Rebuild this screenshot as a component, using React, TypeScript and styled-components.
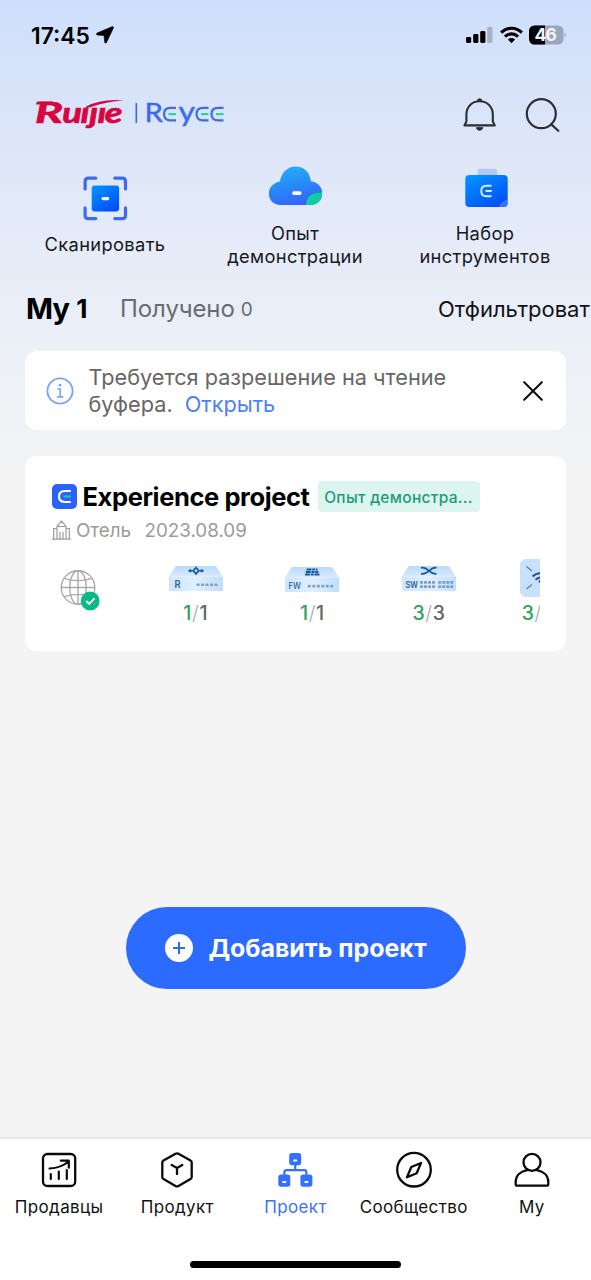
import React from "react";
import styled, { createGlobalStyle } from "styled-components";

const GlobalStyle = createGlobalStyle`
  * { box-sizing: border-box; }
  body { margin: 0; font-family: Inter, "Noto Sans", "Liberation Sans", sans-serif; color: #000; }
  svg { display: block; flex: none; }
  button { font-family: inherit; border: 0; background: none; padding: 0; color: inherit; }
`;

const Screen = styled.div`
  width: 591px;
  height: 1280px;
  display: flex;
  flex-direction: column;
  overflow: hidden;
  background: linear-gradient(180deg, #cfdffb 0px, #dae4f9 110px, #e2e9f8 200px, #ebeff7 330px, #f4f4f4 480px);
`;

const StatusBar = styled.div`
  height: 70px;
  padding: 0 24px 0 31px;
  display: flex;
  align-items: center;
`;

const Clock = styled.span`
  font-size: 22.8px;
  font-weight: 600;
  width: 65px;
  padding-top: 1px;
  white-space: nowrap;
`;

const StatusIcons = styled.div`
  margin-left: auto;
  display: flex;
  align-items: center;
  gap: 6.5px;
`;

const Header = styled.header`
  height: 90px;
  padding: 0 30px 0 33px;
  display: flex;
  align-items: center;
`;

const HeaderActions = styled.div`
  margin-left: auto;
  display: flex;
  gap: 28px;
`;

const QuickActions = styled.div`
  height: 116px;
  padding: 0 10px;
  display: grid;
  grid-template-columns: repeat(3, 190px);
  align-items: center;
`;

const QuickAction = styled.button`
  display: flex;
  flex-direction: column;
  align-items: center;
  gap: 16px;
  padding-bottom: 3px;
`;

const SingleLineAction = styled(QuickAction)`
  gap: 13px;
  padding-bottom: 4px;
`;

const QuickLabel = styled.span<{ $spacing: number }>`
  font-size: 18.3px;
  line-height: 23px;
  color: #15181e;
  letter-spacing: ${(p) => p.$spacing}px;
  white-space: pre-line;
  text-align: center;
`;

const Tabs = styled.div`
  height: 75px;
  padding: 0 0 10px 26px;
  display: flex;
  align-items: center;
  white-space: nowrap;
`;

const ActiveTab = styled.span`
  flex: none;
  width: 94px;
  font-size: 29px;
  font-weight: 700;
  letter-spacing: -0.8px;
  small { font-size: 26px; margin-left: 7px; vertical-align: 1px; }
`;

const Tab = styled.span`
  flex: none;
  width: 318px;
  font-size: 24px;
  letter-spacing: -0.1px;
  color: #686b71;
  small { font-size: 19px; margin-left: 6px; vertical-align: 1px; }
`;

const Filter = styled.span`
  flex: none;
  font-size: 22px;
  color: #101216;
`;

const Notice = styled.section`
  height: 79px;
  margin: 0 25px;
  padding: 0 22px 0 20.5px;
  display: flex;
  align-items: center;
  background: #fff;
  border-radius: 12px;
`;

const NoticeText = styled.p`
  flex: 1;
  margin: 1px 0 0 15px;
  font-size: 21.7px;
  line-height: 27px;
  color: #666;
  white-space: nowrap;
`;

const NoticeLink = styled.a`
  margin-left: 12px;
  color: #4c82f8;
`;

const ProjectCard = styled.section`
  height: 195px;
  margin: 26px 25px 0;
  padding: 24px 26px 0 27px;
  background: #fff;
  border-radius: 12px;
`;

const TitleRow = styled.div`
  height: 33px;
  display: flex;
  align-items: center;
`;

const Title = styled.h2`
  margin: 0 0 0 5.5px;
  width: 235px;
  font-size: 25.5px;
  font-weight: 700;
  letter-spacing: -0.4px;
  white-space: nowrap;
`;

const Tag = styled.span`
  width: 162px;
  height: 31px;
  line-height: 33px;
  border-radius: 4px;
  background: #dcf5ef;
  color: #219b74;
  font-size: 15.5px;
  font-weight: 500;
  letter-spacing: 0.3px;
  text-align: center;
  white-space: nowrap;
`;

const MetaRow = styled.div`
  height: 34px;
  display: flex;
  align-items: center;
  font-size: 18.8px;
  color: #9b9b9b;
  white-space: nowrap;
`;

const MetaKind = styled.span`
  margin-left: 5px;
  width: 68.5px;
`;

const Devices = styled.div`
  margin-top: 12px;
  display: flex;
  gap: 62.7px;
  overflow: hidden;
`;

const Device = styled.div`
  width: 54px;
  flex: none;
  display: flex;
  flex-direction: column;
  align-items: center;
`;

const Count = styled.span`
  height: 26px;
  line-height: 26px;
  font-size: 19.5px;
  font-weight: 500;
  letter-spacing: 0.6px;
  color: #666;
  white-space: nowrap;
  b { font-weight: 500; color: #2aa65a; }
  i { font-style: normal; font-weight: 300; color: #aaa; }
`;

const ClippedDevice = styled(Device)`
  align-items: flex-start;
  ${Count} { margin-left: 3px; }
`;

const Action = styled.div`
  flex: 1;
  display: flex;
  justify-content: center;
  padding-top: 256px;
`;

const AddButton = styled.button`
  width: 340px;
  height: 82px;
  padding-left: 39px;
  display: flex;
  align-items: center;
  gap: 16px;
  border-radius: 41px;
  background: #2b6bff;
  color: #fff;
  font-size: 24.9px;
  font-weight: 700;
  white-space: nowrap;
`;

const NavBar = styled.nav`
  height: 143px;
  border-top: 2px solid #e8e8e8;
  background: #fff;
  display: flex;
  flex-direction: column;
  align-items: center;
`;

const NavItems = styled.div`
  width: 100%;
  height: 122px;
  display: grid;
  grid-template-columns: repeat(5, 1fr);
  align-items: start;
`;

const NavItem = styled.button<{ $active?: boolean }>`
  padding-top: 12px;
  display: flex;
  flex-direction: column;
  align-items: center;
  gap: 7px;
  font-size: 17px;
  line-height: 22px;
  letter-spacing: 0.35px;
  color: ${(p) => (p.$active ? "#3b72f6" : "#111")};
`;

const HomeIndicator = styled.div`
  width: 211px;
  height: 7px;
  border-radius: 4px;
  background: #000;
`;

const LocationIcon = () => (
  <svg width="18" height="18" viewBox="0 0 18 18">
    <path d="M16 .7 1 7.1Q-.2 8.2 1.1 9L8 9.6 8.7 16.2Q9.4 17.9 10.5 16.5L17.4 1.9Q17.6 .2 16 .7Z" fill="#000" stroke="#000" strokeWidth=".6" />
  </svg>
);

const SignalIcon = () => (
  <svg width="27" height="18" viewBox="0 0 27 18">
    <rect x="0" y="11" width="5.2" height="6" rx="1.4" />
    <rect x="7.2" y="8" width="5.2" height="9" rx="1.4" />
    <rect x="14.2" y="5" width="5.2" height="12" rx="1.4" />
    <rect x="21.2" y="1" width="5.2" height="16" rx="1.4" fill="#a5b1c6" />
  </svg>
);

const WifiIcon = () => (
  <svg width="23" height="18" viewBox="0 0 23 18" fill="none" stroke="#000" strokeWidth="3.1">
    <path d="M1.1 6.6C7 .7 16 .7 21.9 6.6" />
    <path d="M5 10.6C8.7 7 14.3 7 18 10.6" />
    <path d="M11.5 17.2 7.9 13.5Q11.5 10.6 15.1 13.5Z" fill="#000" stroke="none" />
  </svg>
);

const BatteryIcon = () => (
  <svg width="38" height="20" viewBox="0 0 38 20">
    <rect x="0" y=".5" width="34.5" height="19" rx="5.5" fill="#9aa6bb" />
    <path d="M5.5 .5H16V19.5H5.5A5.5 5.5 0 0 1 0 14V6A5.5 5.5 0 0 1 5.5 .5Z" />
    <path d="M35.7 7.4Q37.8 10 35.7 12.6Z" fill="#8e9aae" />
    <text x="5.5" y="16.4" fontSize="18" fontWeight="700" fill="#eef3fd" textLength="22.5">46</text>
  </svg>
);

const BrandLogo = () => (
  <svg width="194" height="40" viewBox="0 0 194 40">
    <g fill="#d8063f" stroke="#d8063f" strokeWidth=".7" fontWeight="700" fontStyle="italic" fontFamily="Lato, sans-serif">
      <text x="2" y="27.6" fontSize="28" textLength="28" lengthAdjust="spacingAndGlyphs">R</text>
      <text transform="scale(1.3 1)" x="22.6 36.6 43.2 49.6 55.2" y="27.6" fontSize="28">uıȷıe</text>
      <path d="M4 6.6H20L18 9.6H2.8Z" stroke="none" />
      <path d="M53 11.6Q68 3.4 91 5.4Q73 6.6 57 12.2L52.5 13.2Z" stroke="none" />
    </g>
    <path d="M103.3 8V28" stroke="#3566e8" strokeWidth="1.6" />
    <g fill="#3c6af0" stroke="#3c6af0" strokeWidth=".4" fontFamily="Lato, sans-serif">
      <text x="111.5" y="26.8" fontSize="26.5" textLength="18.5" lengthAdjust="spacingAndGlyphs">R</text>
      <text x="145.5" y="25.8" fontSize="26" textLength="16.5" lengthAdjust="spacingAndGlyphs">y</text>
    </g>
    {[131, 163.5, 178.5].map((x) => (
      <g key={x} fill="none" strokeWidth="2.2">
        <path d={`M${x + 12} 12.8H${x + 6.5}Q${x} 12.8 ${x} 19.1T${x + 6.5} 25.4H${x + 12}`} stroke="#3c6af0" />
        <path d={`M${x + 4.5} 19.1H${x + 12}`} stroke="#28d5a6" />
      </g>
    ))}
  </svg>
);

const BellIcon = () => (
  <svg width="35" height="34" viewBox="-.6 0 35 34" fill="none" stroke="#292e38" strokeWidth="2.1" strokeLinejoin="round">
    <path d="M1.8 27.4H32.2L30.2 23.5V16.5C30.2 8.5 24.5 3.3 17 3.3S3.8 8.5 3.8 16.5V23.5Z" />
    <path d="M14.8 3a2.2 2.2 0 0 1 4.4 0M13.8 29.7h6.4q-.7 2.6-3.2 2.6t-3.2-2.6Z" fill="#292e38" strokeWidth="1" />
  </svg>
);

const SearchIcon = () => (
  <svg width="36" height="34" viewBox="-.5 0 36 34" fill="none" stroke="#292e38" strokeWidth="2.2" strokeLinecap="round">
    <circle cx="15.8" cy="15.7" r="14.5" />
    <path d="M25.8 26.4 32.8 32.8" />
  </svg>
);

const Gradients = () => (
  <defs>
    <linearGradient id="blue" x1="0" y1="0" x2=".7" y2="1">
      <stop offset="0" stopColor="#0597ff" />
      <stop offset="1" stopColor="#0150f8" />
    </linearGradient>
    <linearGradient id="cloud" x1=".3" y1="0" x2=".6" y2="1">
      <stop offset="0" stopColor="#21b0fa" />
      <stop offset="1" stopColor="#3361fa" />
    </linearGradient>
  </defs>
);

const ScanIcon = () => (
  <svg width="44" height="44" viewBox="-.3 -.4 44 44" overflow="visible">
    <Gradients />
    <path d="M1.8 12.5V5Q1.8 1.8 5 1.8H12.5M31.5 1.8H39Q42.2 1.8 42.2 5V12.5M42.2 31.5V39Q42.2 42.2 39 42.2H31.5M12.5 42.2H5Q1.8 42.2 1.8 39V31.5" fill="none" stroke="#3d6bee" strokeWidth="3.2" strokeLinecap="round" />
    <rect x="8.4" y="9" width="27.4" height="26" rx="2.8" fill="url(#blue)" />
    <rect x="18.3" y="20.5" width="7.6" height="3.3" rx="1.4" fill="#fff" />
  </svg>
);

const CloudIcon = () => (
  <svg width="54" height="40" viewBox="-.5 0 54 40" overflow="visible">
    <clipPath id="cloudShape">
      <path d="M12 39C5 39 .3 34 .3 27.5C.3 21.5 5 16.3 11.4 15.4C12.7 6.5 19 .4 27.2 .4C35.5 .4 41.2 6 42.4 15.2C49 16 53.8 21 53.8 27.3C53.8 34 49 39 42 39Z" />
    </clipPath>
    <g clipPath="url(#cloudShape)">
      <rect width="54" height="40" fill="url(#cloud)" />
      <path d="M37.4 40C37.4 31 42 26.5 54 26.5V40Z" fill="#0fce9e" />
    </g>
    <rect x="23.8" y="25.2" width="9.2" height="3.7" rx="1.6" fill="#fff" />
  </svg>
);

const ToolkitIcon = () => (
  <svg width="43" height="40" viewBox="-1 -2 43 40" overflow="visible">
    <rect x="12.7" y=".7" width="19.5" height="12" rx="2.5" fill="#b5c5fa" />
    <rect x=".3" y="7" width="42.4" height="32" rx="4" fill="url(#blue)" />
    <path d="M34 39Q35 34 42.7 31V35Q42.7 39 38.7 39Z" fill="#5b8bff" opacity=".6" />
    <path d="M26.5 17.7H21.5Q16.2 17.7 16.2 23T21.5 28.3H26.5M20.5 23H26.8" stroke="#d9edff" strokeWidth="1.9" fill="none" />
  </svg>
);

const InfoIcon = () => (
  <svg width="28" height="28" viewBox="0 0 28 28" fill="none" stroke="#7ba5f6" strokeWidth="1.9">
    <circle cx="14" cy="14" r="12.6" />
    <path d="M11.3 12H14.2V19.7M11 19.9H17.2" strokeWidth="1.6" />
    <circle cx="14" cy="8.2" r="1.4" fill="#7ba5f6" stroke="none" />
  </svg>
);

const CloseIcon = () => (
  <svg width="22" height="22" viewBox="0 0 22 22" stroke="#111" strokeWidth="2.1" strokeLinecap="round">
    <path d="M2.2 2.2 19.8 19.8M19.8 2.2 2.2 19.8" />
  </svg>
);

const ProjectIcon = () => (
  <svg width="25" height="25" viewBox="0 0 25 25" fill="none">
    <rect width="25" height="25" rx="5" fill="#2b62fb" />
    <path d="M18.8 7H13Q7 7 7 12.5T13 18H18.8" stroke="#fff" strokeWidth="2.2" />
    <path d="M11.5 12.5H18.8" stroke="#19c9c0" strokeWidth="2" />
  </svg>
);

const HotelIcon = () => (
  <svg width="19" height="20" viewBox="0 0 19 20" fill="none" stroke="#9b9b9b" strokeWidth="1.2">
    <path d="M0 19.2H19M1.7 19V8.5H5M5 19V6.3L9.5 1.2 14 6.3V19M14 8.5H17.3V19M5 6.5H14M8 19V12M11 19V12" />
  </svg>
);

const GlobeIcon = () => (
  <svg width="54" height="53" viewBox="0 -10 54 53" fill="none" stroke="#aaa" strokeWidth="1.4">
    <circle cx="26" cy="18.5" r="16.8" />
    <ellipse cx="26" cy="18.5" rx="8.3" ry="16.8" />
    <path d="M26 1.7V35.3M9.2 18.5H42.8M12.2 9.3Q26 14 39.8 9.3M12.2 27.7Q26 23 39.8 27.7" />
    <circle cx="38.2" cy="32" r="9.4" fill="#0aba85" stroke="none" />
    <path d="M34.2 32 37.2 34.8 42.5 29.4" stroke="#fff" strokeWidth="1.9" />
  </svg>
);

const Box = ({ label, children }: { label: string; children: React.ReactNode }) => (
  <svg width="54" height="41" viewBox="0 0 54 41">
    <defs>
      <linearGradient id="face" x2="1">
        <stop stopColor="#cde5fd" />
        <stop offset=".5" stopColor="#e0effe" />
        <stop offset="1" stopColor="#bfdefa" />
      </linearGradient>
      <linearGradient id="top" x2="0" y2="1">
        <stop stopColor="#b8dafa" />
        <stop offset="1" stopColor="#d9ebfd" />
      </linearGradient>
    </defs>
    <path d="M7.5 7H45Q46.5 7 47.5 8L54 17.5H0L6 8Q6.5 7 7.5 7Z" fill="url(#top)" />
    <path d="M0 17.5H54V30.5Q54 32 52.5 32H1.5Q0 32 0 30.5Z" fill="url(#face)" />
    <text
      x={label === "R" ? 5.5 : 3.5}
      y="28.5"
      fontSize={label === "R" ? 10 : 8.5}
      fontWeight={label === "FW" ? 500 : 600}
      textLength={label === "R" ? 6 : 12.5}
      lengthAdjust="spacingAndGlyphs"
      fill="#28629f"
    >
      {label}
    </text>
    {children}
  </svg>
);

const Ports = ({ x, y, count }: { x: number; y: number; count: number }) => (
  <g fill="#7d9fc8">
    {Array.from({ length: count }, (_, i) => (
      <rect key={i} x={x + i * 4.5} y={y} width="3" height="2.6" rx=".7" />
    ))}
  </g>
);

const RouterIcon = () => (
  <Box label="R">
    <path d="M19.5 11.7H25M29 11.7H34.5M27 7.5V9.5M27 14V16" stroke="#17589b" strokeWidth="1.5" fill="none" />
    <path d="M19 11.7 22 9.7V13.7ZM35 11.7 32 9.7V13.7Z" fill="#17589b" />
    <circle cx="27" cy="11.7" r="2.1" fill="none" stroke="#17589b" strokeWidth="1.5" />
    <Ports x={27.5} y={24.5} count={5} />
  </Box>
);

const FirewallIcon = () => (
  <svg width="54" height="41" viewBox="0 -1 54 41">
    <Box label="FW">
      <path d="M21.5 9.5H32.5M20.8 12H33.5M20 14.5H34.5" stroke="#17589b" strokeWidth="1.9" strokeDasharray="5 .7 3 .7" />
      <Ports x={22.8} y={24.8} count={6} />
    </Box>
  </svg>
);

const SwitchIcon = () => (
  <Box label="SW">
    <path d="M19 8.7H20.5Q23.5 8.7 27 11.8T33.5 14.9H34.5M19 14.9H20.5Q23.5 14.9 27 11.8T33.5 8.7H34.5" stroke="#17589b" strokeWidth="1.8" fill="none" />
    <g fill="#7d9fc8">
      {[0, 1, 2, 3, 4, 5, 6, 7].map((i) => {
        const x = 18 + i * 4 + (i > 3 ? 2.2 : 0);
        return (
          <g key={i}>
            <rect x={x} y="22" width="3" height="2.8" rx=".6" />
            <rect x={x} y="26.2" width="3" height="2.8" rx=".6" />
          </g>
        );
      })}
    </g>
  </Box>
);

const AccessPointIcon = () => (
  <svg width="54" height="41" viewBox="-1 0 54 41">
    <rect x="0" y="0" width="54" height="38" rx="6" fill="#c8e0fb" />
    <path d="M6.5 7.5 12 12M6.5 30 12 25.5" stroke="#56799f" strokeWidth="1.1" />
    <path d="M12.5 17.6Q19.5 11 28 17.6M15.5 20.7Q20 16.5 25 20.7" fill="none" stroke="#17589b" strokeWidth="2" />
    <circle cx="20" cy="22.5" r="1.4" fill="#17589b" />
  </svg>
);

const PlusIcon = () => (
  <svg width="28" height="28" viewBox="0 0 28 28">
    <circle cx="14" cy="14" r="14" fill="#fff" />
    <path d="M8 14H20M14 8V20" stroke="#2b6bff" strokeWidth="2" />
  </svg>
);

const navStroke = { fill: "none", stroke: "#0a0a0a", strokeWidth: 2.3, strokeLinejoin: "round" as const, strokeLinecap: "round" as const };

const SellersIcon = () => (
  <svg width="38" height="38" viewBox="0 0 38 38" {...navStroke}>
    <rect x="3" y="3" width="32.2" height="32" rx="4.5" />
    <path d="M9.5 17.5Q21 17 28.5 10.5M20.8 9.7H28.8V16.7M10.8 23V28M18.8 20.5V28M26.8 19V28" strokeWidth="2.2" />
  </svg>
);

const ProductIcon = () => (
  <svg width="38" height="38" viewBox="0 0 38 38" {...navStroke}>
    <path d="M17.5 2.7Q19 1.9 20.5 2.7L32.5 9.5Q33.7 10.2 33.7 11.5V26Q33.7 27.4 32.5 28.1L20.5 35Q19 35.8 17.5 35L5.5 28.1Q4.3 27.4 4.3 26V11.5Q4.3 10.2 5.5 9.5Z" />
    <path d="M13.7 14 19 17 24.3 14M19 17V23" />
  </svg>
);

const ProjectNavIcon = () => (
  <svg width="38" height="38" viewBox="0 0 38 38">
    <path d="M19.2 12V19.5M8.3 26V21.5Q8.3 19.2 10.8 19.2H28Q30.4 19.2 30.4 21.5V26" fill="none" stroke="#3370ff" strokeWidth="2.2" />
    {[[13.2, 2], [2.3, 23.5], [24.4, 23.5]].map(([x, y]) => (
      <g key={x}>
        <rect x={x} y={y} width="12" height="12.2" rx="2.7" fill="#3370ff" />
        <rect x={x + 4} y={y + 6.5} width="4" height="2" rx=".7" fill="#fff" />
      </g>
    ))}
  </svg>
);

const CommunityIcon = () => (
  <svg width="38" height="38" viewBox="0 0 38 38" {...navStroke}>
    <circle cx="19" cy="18.7" r="16.8" />
    <path d="M26 12 21.7 22.3 12 26.2 16.3 16Z" />
  </svg>
);

const ProfileIcon = () => (
  <svg width="38" height="38" viewBox="0 0 38 38" {...navStroke}>
    <circle cx="19" cy="11.4" r="8.5" />
    <path d="M14 19.2C7 20.5 2.7 25 2.7 31V33Q2.7 34.7 4.4 34.7H33.6Q35.3 34.7 35.3 33V31C35.3 25 31 20.5 24 19.2" />
  </svg>
);

const devices = [
  { icon: <RouterIcon />, online: 1, total: 1 },
  { icon: <FirewallIcon />, online: 1, total: 1 },
  { icon: <SwitchIcon />, online: 3, total: 3 },
];

export default function App() {
  return (
    <Screen>
      <GlobalStyle />
      <StatusBar>
        <Clock>17:45</Clock>
        <LocationIcon />
        <StatusIcons>
          <SignalIcon />
          <WifiIcon />
          <BatteryIcon />
        </StatusIcons>
      </StatusBar>
      <Header>
        <BrandLogo />
        <HeaderActions>
          <BellIcon />
          <SearchIcon />
        </HeaderActions>
      </Header>
      <QuickActions>
        <SingleLineAction>
          <ScanIcon />
          <QuickLabel $spacing={0.35}>Сканировать</QuickLabel>
        </SingleLineAction>
        <QuickAction>
          <CloudIcon />
          <QuickLabel $spacing={0.35}>{"Опыт\nдемонстрации"}</QuickLabel>
        </QuickAction>
        <QuickAction>
          <ToolkitIcon />
          <QuickLabel $spacing={0.35}>{"Набор\nинструментов"}</QuickLabel>
        </QuickAction>
      </QuickActions>
      <Tabs>
        <ActiveTab>My<small>1</small></ActiveTab>
        <Tab>Получено<small>0</small></Tab>
        <Filter>Отфильтровать</Filter>
      </Tabs>
      <Notice>
        <InfoIcon />
        <NoticeText>
          Требуется разрешение на чтение<br />
          буфера.<NoticeLink>Открыть</NoticeLink>
        </NoticeText>
        <CloseIcon />
      </Notice>
      <ProjectCard>
        <TitleRow>
          <ProjectIcon />
          <Title>Experience project</Title>
          <Tag>Опыт демонстра...</Tag>
        </TitleRow>
        <MetaRow>
          <HotelIcon />
          <MetaKind>Отель</MetaKind>
          <span>2023.08.09</span>
        </MetaRow>
        <Devices>
          <Device><GlobeIcon /></Device>
          {devices.map((d, i) => (
            <Device key={i}>
              {d.icon}
              <Count><b>{d.online}</b><i>/</i>{d.total}</Count>
            </Device>
          ))}
          <ClippedDevice>
            <AccessPointIcon />
            <Count><b>3</b><i>/</i>3</Count>
          </ClippedDevice>
        </Devices>
      </ProjectCard>
      <Action>
        <AddButton>
          <PlusIcon />
          <span>Добавить проект</span>
        </AddButton>
      </Action>
      <NavBar>
        <NavItems>
          <NavItem><SellersIcon />Продавцы</NavItem>
          <NavItem><ProductIcon />Продукт</NavItem>
          <NavItem $active><ProjectNavIcon />Проект</NavItem>
          <NavItem><CommunityIcon />Сообщество</NavItem>
          <NavItem><ProfileIcon />My</NavItem>
        </NavItems>
        <HomeIndicator />
      </NavBar>
    </Screen>
  );
}
